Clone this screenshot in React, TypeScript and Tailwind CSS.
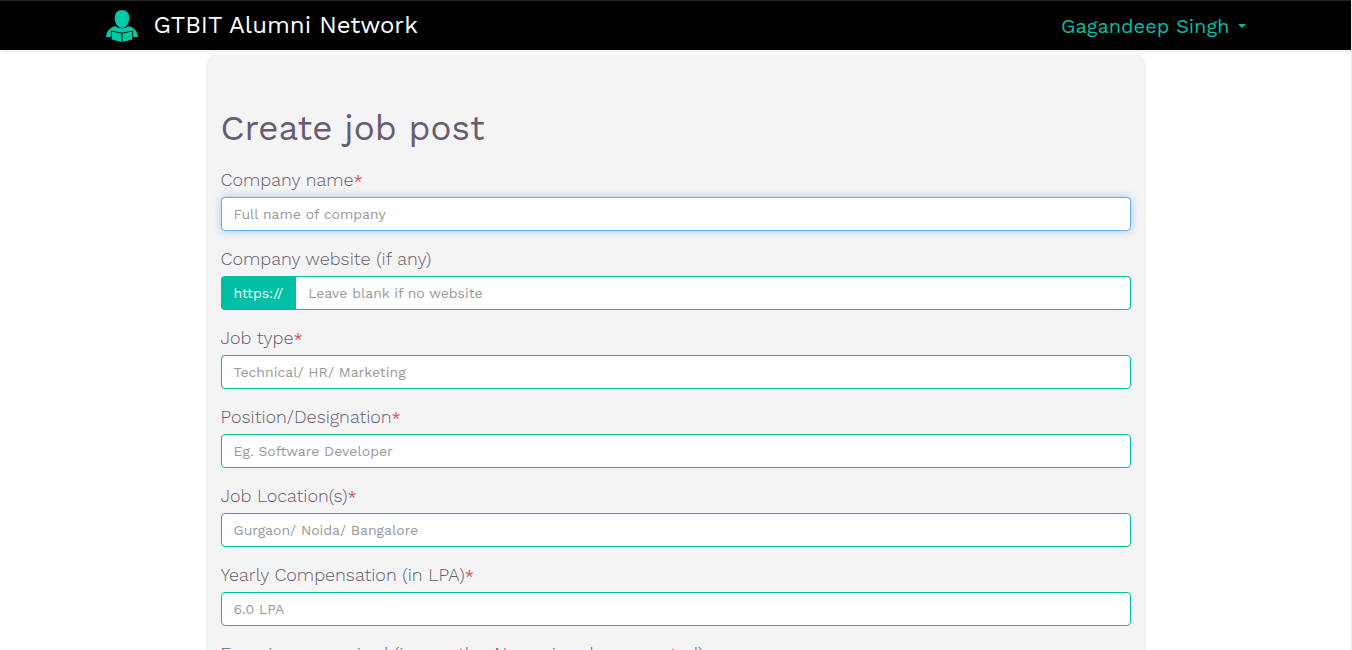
import { useEffect, useRef } from "react";

type Field = { id: string; label: string; placeholder: string; required?: boolean; prefix?: string };

const fields: Field[] = [
  { id: "company", label: "Company name", placeholder: "Full name of company", required: true },
  { id: "website", label: "Company website (if any)", placeholder: "Leave blank if no website", prefix: "https://" },
  { id: "type", label: "Job type", placeholder: "Technical/ HR/ Marketing", required: true },
  { id: "position", label: "Position/Designation", placeholder: "Eg. Software Developer", required: true },
  { id: "location", label: "Job Location(s)", placeholder: "Gurgaon/ Noida/ Bangalore", required: true },
  { id: "pay", label: "Yearly Compensation (in LPA)", placeholder: "6.0 LPA", required: true },
  { id: "experience", label: "Experience required (in months, Numeric value expected)", placeholder: "6" },
];

function Logo() {
  return (
    <svg viewBox="0 0 32 32" className="size-8 shrink-0" fill="#00c9a7" aria-hidden="true">
      <path d="M16 0c4.600 0 7.300 3.200 7.300 8.200S20 17.800 16 17.800 8.700 13.200 8.700 8.200 11.400 0 16 0z" />
      <path d="M9.200 16.300C11 17.600 13.400 18.200 16 18.200s5-.6 6.800-1.900c5.500 1.400 8.700 4.700 9.200 10.700h-4.900v-6.600L16 22.700 4.900 20.400V27H0c.5-6 3.700-9.300 9.200-10.700z" />
      <path d="M5.800 21.500l9.700 2V32l-9.700-2.500zM26.200 21.500l-9.700 2V32l9.700-2.500z" />
    </svg>
  );
}

function FormField({ field, focused }: { field: Field; focused: boolean }) {
  const input = useRef<HTMLInputElement>(null);
  useEffect(() => {
    if (focused) input.current?.focus({ preventScroll: true });
  }, [focused]);
  return (
    <div className="mb-[15px]">
      <label htmlFor={field.id} className="mb-[5px] block text-lg leading-[25px] font-light">
        {field.label}
        {field.required && <span className="text-base leading-none font-normal text-[#e0444f]">*</span>}
      </label>
      <div className="flex">
        {field.prefix && (
          <span className="flex items-center rounded-l bg-[#00bfa5] px-[13px] text-sm text-white">{field.prefix}</span>
        )}
        <input
          ref={input}
          id={field.id}
          type="text"
          placeholder={field.placeholder}
          required={field.required}
          className={
            (field.prefix ? "rounded-r border-l-0 " : "rounded ") +
            "h-[34px] min-w-0 flex-1 border border-[#00bfa5] bg-white px-3 text-sm caret-transparent outline-none placeholder:text-[#999999] focus:border-[#66afe9] focus:shadow-[0_0_8px_rgba(102,175,233,0.6)]"
          }
        />
      </div>
    </div>
  );
}

export default function App() {
  return (
    <div className="h-screen overflow-hidden border-r border-[#eeeeee] bg-white font-['Work_Sans',Inter,sans-serif] text-[#675c70]">
      <header className="h-[50px] border-t border-[#222222] bg-black shadow-[0_2px_4px_rgba(0,0,0,0.08)]">
        <div className="mx-auto flex h-full max-w-[1170px] items-center justify-between px-[15px]">
          <a href="#" className="flex items-center gap-4 text-2xl text-white">
            <Logo />
            <span className="pb-0.5">GTBIT Alumni Network</span>
          </a>
          <button type="button" className="flex items-center gap-2 text-xl text-[#00bfa5]">
            Gagandeep Singh
            <span className="border-x-4 border-t-4 border-x-transparent border-t-[#00bfa5]" />
          </button>
        </div>
      </header>
      <main className="mx-auto mt-1 max-w-[940px] rounded-xl bg-[#f4f4f4] px-[15px] pt-[54px] pb-8">
        <h1 className="mb-[19px] text-[35px] leading-10">Create job post</h1>
        <form>
          {fields.map((field, i) => (
            <FormField key={field.id} field={field} focused={i === 0} />
          ))}
        </form>
      </main>
    </div>
  );
}
